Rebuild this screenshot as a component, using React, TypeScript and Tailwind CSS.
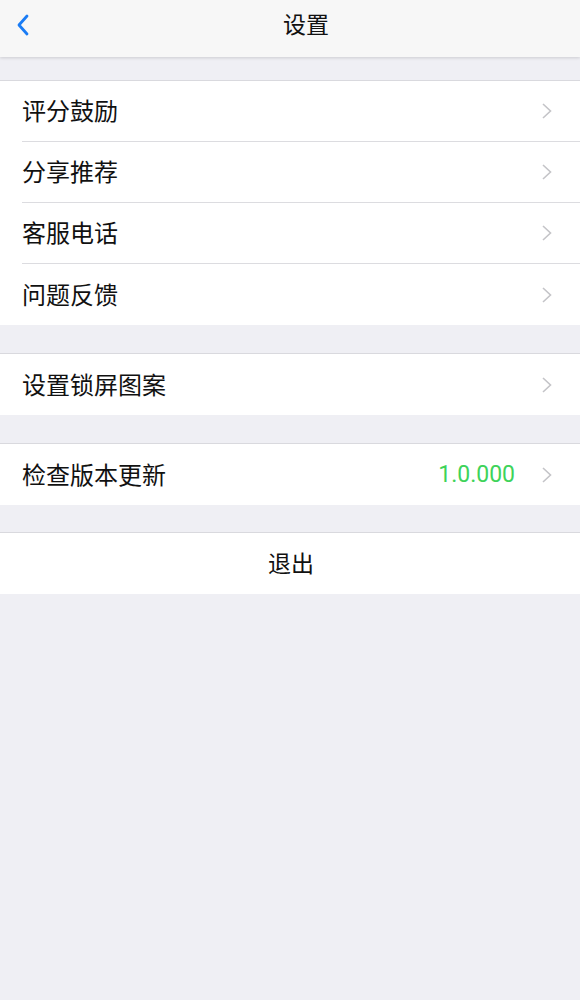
const font = { fontFamily: '"Noto Sans CJK SC", "Noto Sans", sans-serif' };

function Chevron() {
  return (
    <svg width="12" height="18" viewBox="0 0 12 18" className="shrink-0">
      <path d="M2 2 L9.5 9 L2 16" fill="none" stroke="#c4c4c8" strokeWidth="1.6" />
    </svg>
  );
}

function Row({ label, value, last }: { label: string; value?: string; last?: boolean }) {
  return (
    <div className="pl-[22px] bg-white">
      <div
        className={
          'h-[61px] flex items-center justify-between pr-[27px] ' +
          (last ? '' : 'border-b border-[#dcdce0]')
        }
      >
        <span className="text-[24px] leading-none text-[#111] -mt-[2px]">{label}</span>
        <div className="flex items-center gap-[26px]">
          {value && (
            <span className="text-[23px] leading-none text-[#3ed35a]" style={{ fontFamily: 'Roboto, sans-serif' }}>
              {value}
            </span>
          )}
          <Chevron />
        </div>
      </div>
    </div>
  );
}

function Group({ children, gap }: { children: React.ReactNode; gap: string }) {
  return <div className={gap + ' border-t border-[#d9d9de] bg-white'}>{children}</div>;
}

export default function App() {
  return (
    <div className="w-[580px] h-[1000px] bg-[#efeff4] flex flex-col" style={font}>
      <div className="h-[57px] bg-[#f7f7f7] shadow-[0_1px_3px_rgba(0,0,0,0.15)] relative shrink-0">
        <svg width="14" height="22" viewBox="0 0 14 22" className="absolute left-[16px] top-[14px]">
          <path d="M11 2 L3 11 L11 20" fill="none" stroke="#1a7cf5" strokeWidth="2.8" strokeLinecap="round" strokeLinejoin="round" />
        </svg>
        <span className="absolute left-[283px] top-[12px] text-[23px] leading-none text-[#111]">设置</span>
      </div>
      <Group gap="mt-[23px]">
        <Row label="评分鼓励" />
        <Row label="分享推荐" />
        <Row label="客服电话" />
        <Row label="问题反馈" last />
      </Group>
      <Group gap="mt-[28px]">
        <Row label="设置锁屏图案" last />
      </Group>
      <Group gap="mt-[28px]">
        <Row label="检查版本更新" value="1.0.000" last />
      </Group>
      <Group gap="mt-[27px]">
        <div className="h-[61px] flex items-center justify-center pl-[2px]">
          <span className="text-[23px] leading-none text-[#111] -mt-[2px]">退出</span>
        </div>
      </Group>
    </div>
  );
}
